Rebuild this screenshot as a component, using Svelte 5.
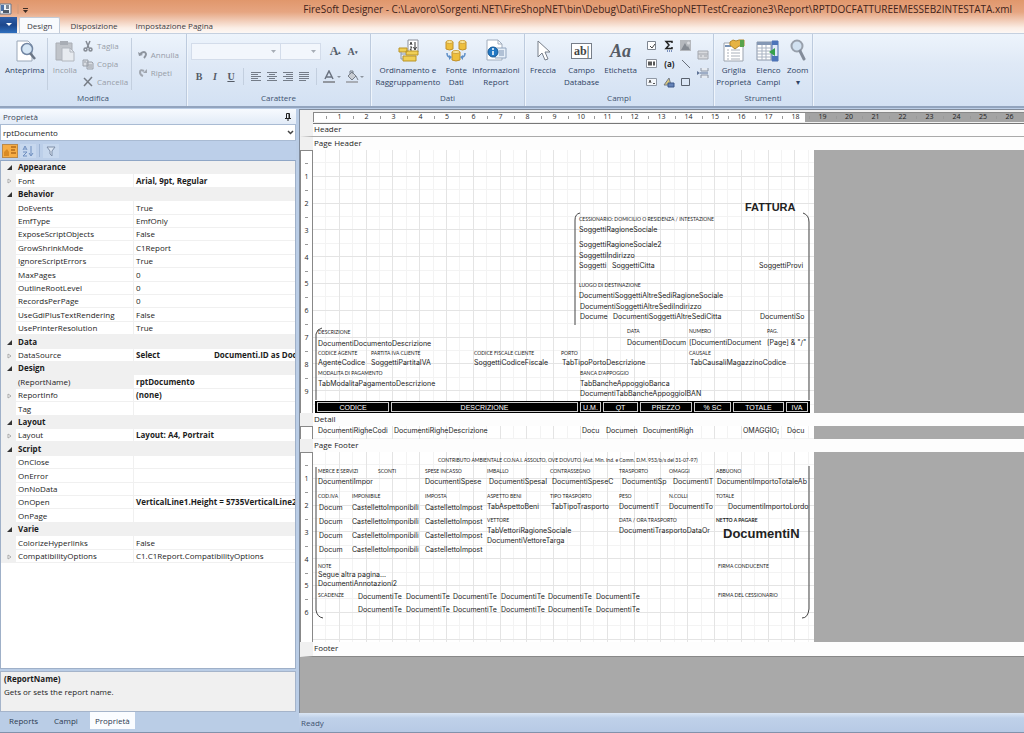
<script lang="ts">
	type Field = [x: number, y: number, text: string, kind?: string];
	type Prop = { name: string; value?: string; bold?: boolean; expand?: boolean; category?: boolean; selected?: boolean };

	const title =
		'FireSoft Designer - C:\\Lavoro\\Sorgenti.NET\\FireShopNET\\bin\\Debug\\Dati\\FireShopNETTestCreazione3\\Report\\RPTDOCFATTUREEMESSEB2INTESTATA.xml';

	const tabs = ['Design', 'Disposizione', 'Impostazione Pagina'];
	const panelTabs = ['Reports', 'Campi', 'Proprietà'];

	let activeTab = 'Design';
	let activePanel = 'Proprietà';

	const props: Prop[] = [
		{ name: 'Appearance', category: true },
		{ name: 'Font', value: 'Arial, 9pt, Regular', bold: true, expand: true },
		{ name: 'Behavior', category: true },
		{ name: 'DoEvents', value: 'True' },
		{ name: 'EmfType', value: 'EmfOnly' },
		{ name: 'ExposeScriptObjects', value: 'False' },
		{ name: 'GrowShrinkMode', value: 'C1Report' },
		{ name: 'IgnoreScriptErrors', value: 'True' },
		{ name: 'MaxPages', value: '0' },
		{ name: 'OutlineRootLevel', value: '0' },
		{ name: 'RecordsPerPage', value: '0' },
		{ name: 'UseGdiPlusTextRendering', value: 'False' },
		{ name: 'UsePrinterResolution', value: 'True' },
		{ name: 'Data', category: true },
		{ name: 'DataSource', value: 'Select                          Documenti.ID as Doc', bold: true, expand: true },
		{ name: 'Design', category: true },
		{ name: '(ReportName)', value: 'rptDocumento', bold: true, selected: true },
		{ name: 'ReportInfo', value: '(none)', bold: true, expand: true },
		{ name: 'Tag' },
		{ name: 'Layout', category: true },
		{ name: 'Layout', value: 'Layout: A4, Portrait', bold: true, expand: true },
		{ name: 'Script', category: true },
		{ name: 'OnClose' },
		{ name: 'OnError' },
		{ name: 'OnNoData' },
		{ name: 'OnOpen', value: 'VerticalLine1.Height = 5735VerticalLine2', bold: true },
		{ name: 'OnPage' },
		{ name: 'Varie', category: true },
		{ name: 'ColorizeHyperlinks', value: 'False' },
		{ name: 'CompatibilityOptions', value: 'C1.C1Report.CompatibilityOptions', expand: true }
	];

	// centimetres to whole screen pixels
	const cm = (n: number) => Math.round((n * 134) / 5);
	const span = (n: number) => cm(n + 0.5) - cm(n - 0.5);
	const range = (n: number) => Array.from({ length: n }, (_, i) => i + 1);

	const pageHeader: Field[] = [
		[431, 52, 'FATTURA', 'big'],
		[266, 64, 'CESSIONARIO: DOMICILIO O RESIDENZA / INTESTAZIONE', 'tiny'],
		[266, 75, 'SoggettiRagioneSociale'],
		[266, 90, 'SoggettiRagioneSociale2'],
		[266, 101, 'SoggettiIndirizzo'],
		[266, 111, 'Soggetti'],
		[299, 111, 'SoggettiCitta'],
		[446, 111, 'SoggettiProvi'],
		[266, 130, 'LUOGO DI DESTINAZIONE', 'tiny'],
		[266, 141, 'DocumentiSoggettiAltreSediRagioneSociale'],
		[267, 152, 'DocumentiSoggettiAltreSediIndirizzo'],
		[267, 162, 'Docume'],
		[300, 162, 'DocumentiSoggettiAltreSediCitta'],
		[447, 162, 'DocumentiSo'],
		[314, 176, 'DATA', 'tiny'],
		[376, 176, 'NUMERO', 'tiny'],
		[454, 176, 'PAG.', 'tiny'],
		[5, 177, 'DESCRIZIONE', 'tiny'],
		[314, 188, 'DocumentiDocum'],
		[376, 188, '[DocumentiDocument'],
		[454, 188, '[Page] & "/"'],
		[5, 189, 'DocumentiDocumentoDescrizione'],
		[5, 198, 'CODICE AGENTE', 'tiny'],
		[58, 198, 'PARTITA IVA CLIENTE', 'tiny'],
		[161, 198, 'CODICE FISCALE CLIENTE', 'tiny'],
		[248, 198, 'PORTO', 'tiny'],
		[376, 198, 'CAUSALE', 'tiny'],
		[5, 208, 'AgenteCodice'],
		[58, 208, 'SoggettiPartitaIVA'],
		[161, 208, 'SoggettiCodiceFiscale'],
		[249, 208, 'TabTipoPortoDescrizione'],
		[377, 208, 'TabCausaliMagazzinoCodice'],
		[5, 218, 'MODALITA DI PAGAMENTO', 'tiny'],
		[267, 218, 'BANCA D\'APPOGGIO', 'tiny'],
		[5, 229, 'TabModalitaPagamentoDescrizione'],
		[267, 229, 'TabBancheAppoggioBanca'],
		[267, 239, 'DocumentiTabBancheAppoggioIBAN']
	];

	const detail: Field[] = [
		[5, 0, 'DocumentiRigheCodi'],
		[81, 0, 'DocumentiRigheDescrizione'],
		[269, 0, 'Docu'],
		[293, 0, 'Documen'],
		[330, 0, 'DocumentiRigh'],
		[430, 0, 'OMAGGIO¡'],
		[474, 0, 'Docu']
	];

	const pageFooter: Field[] = [
		[125, 3, 'CONTRIBUTO AMBIENTALE CO.NA.I. ASSOLTO, OVE DOVUTO. (Aut. Min. Ind. e Comm. D.M. 953/b/s del 31-07-97)', 'tiny'],
		[5, 14, 'MERCE E SERVIZI', 'tiny'],
		[65, 14, 'SCONTI', 'tiny'],
		[112, 14, 'SPESE INCASSO', 'tiny'],
		[174, 14, 'IMBALLO', 'tiny'],
		[237, 14, 'CONTRASSEGNO', 'tiny'],
		[306, 14, 'TRASPORTO', 'tiny'],
		[356, 14, 'OMAGGI', 'tiny'],
		[403, 14, 'ABBUONO', 'tiny'],
		[5, 25, 'DocumentiImpor'],
		[112, 25, 'DocumentiSpese'],
		[176, 25, 'DocumentiSpesaI'],
		[239, 25, 'DocumentiSpeseC'],
		[309, 25, 'DocumentiSp'],
		[360, 25, 'DocumentiT'],
		[404, 25, 'DocumentiImportoTotaleAb'],
		[5, 39, 'COD.IVA', 'tiny'],
		[39, 39, 'IMPONIBILE', 'tiny'],
		[112, 39, 'IMPOSTA', 'tiny'],
		[174, 39, 'ASPETTO BENI', 'tiny'],
		[237, 39, 'TIPO TRASPORTO', 'tiny'],
		[306, 39, 'PESO', 'tiny'],
		[356, 39, 'N.COLLI', 'tiny'],
		[403, 39, 'TOTALE', 'tiny'],
		[174, 50, 'TabAspettoBeni'],
		[238, 50, 'TabTipoTrasporto'],
		[306, 50, 'DocumentiT'],
		[356, 50, 'DocumentiTo'],
		[415, 50, 'DocumentiImportoLordo'],
		[174, 63, 'VETTORE', 'tiny'],
		[306, 63, 'DATA / ORA TRASPORTO', 'tiny'],
		[403, 63, 'NETTO A PAGARE', 'tiny strong'],
		[174, 74, 'TabVettoriRagioneSociale'],
		[306, 74, 'DocumentiTrasportoDataOr'],
		[410, 77, 'DocumentiN', 'net'],
		[174, 84, 'DocumentiVettoreTarga'],
		...[51, 65, 79, 93].flatMap((y): Field[] => [
			[6, y, 'Docum'],
			[39, y, 'CastellettoImponibili'],
			[112, y, 'CastellettoImpost']
		]),
		[5, 109, 'NOTE', 'tiny'],
		[405, 109, 'FIRMA CONDUCENTE', 'tiny'],
		[5, 118, 'Segue altra pagina...'],
		[5, 127, 'DocumentiAnnotazioni2'],
		[5, 138, 'SCADENZE', 'tiny'],
		[405, 138, 'FIRMA DEL CESSIONARIO', 'tiny'],
		...[140, 153].flatMap((y) => [45, 93, 140, 188, 235, 283].map((x): Field => [x, y, 'DocumentiTe']))
	];

	const band: [string, number][] = [
		['CODICE', 72],
		['DESCRIZIONE', 187],
		['U.M.', 21],
		['QT', 35],
		['PREZZO', 52],
		['% SC', 37],
		['TOTALE', 51],
		['IVA', 22]
	];

	const sections = [
		{
			name: 'Page Header',
			height: 263,
			marks: 9,
			fields: pageHeader,
			frame: 'M262 175V70Q262 64 267 63M490 63Q496 65 496 72V250M3 250V184Q4 179 9 178'
		},
		{ name: 'Detail', height: 13, marks: 0, fields: detail, frame: '' },
		{
			name: 'Page Footer',
			height: 190,
			marks: 6,
			fields: pageFooter,
			frame: 'M3 15V158Q4 165 10 166M496 14V157Q495 166 489 166'
		}
	];

	const smallTools = ['check', 'sigma', 'image', 'barcode', 'braces', 'line', 'label', 'shape', 'rect'];
</script>

{#snippet glyph(name: string)}
	{#if name === 'preview'}
		<svg width="24" height="24" viewBox="0 0 24 24" fill="none">
			<path d="M4 2h11l4 4v16H4z" fill="#fff" stroke="#9aa7b8" />
			<circle cx="14" cy="10" r="5.5" fill="#d5e6f5" stroke="#7286a3" stroke-width="1.5" />
			<path d="M17 14l5 6" stroke="#6b7686" stroke-width="2.5" />
		</svg>
	{:else if name === 'paste'}
		<svg width="24" height="24" viewBox="0 0 24 24" fill="none">
			<path d="M3 4h16v17H3z" fill="#c0c4ca" stroke="#a9adb4" />
			<path d="M7 2h8v4H7z" fill="#a8adb5" />
			<path d="M9 9h8l4 4v9H9z" fill="#e7ebf0" stroke="#b1b6be" />
			<path d="M17 9v4h4" stroke="#b1b6be" />
		</svg>
	{:else if name === 'cut'}
		<svg width="12" height="12" viewBox="0 0 12 12" fill="none" stroke="#858b94" stroke-width="1.5">
			<path d="M4 1l3 7M8 1L5 8" />
			<circle cx="3.5" cy="9.5" r="1.5" /><circle cx="8.5" cy="9.5" r="1.5" />
		</svg>
	{:else if name === 'copy'}
		<svg width="12" height="12" viewBox="0 0 12 12" fill="#d9dde3" stroke="#9aa0a9">
			<path d="M1 2h5v6H1zM5 4h5l1 1v6H5z" /><path d="M6 7h4M6 9h4M2 4h2" />
		</svg>
	{:else if name === 'delete'}
		<svg width="12" height="12" viewBox="0 0 12 12" stroke="#777d86" stroke-width="1.5"><path d="M2 2l8 8M10 1L2 10" /></svg>
	{:else if name === 'undo'}
		<svg width="10" height="10" viewBox="0 0 10 10" fill="none"><path d="M2 4q5-4 6 0q0 2-2 4" stroke="#8d949e" stroke-width="2" /><path d="M0 2l1 4 4-1z" fill="#8d949e" /></svg>
	{:else if name === 'redo'}
		<svg width="10" height="10" viewBox="0 0 10 10" fill="none"><path d="M6 3q-4-2-4 1q0 3 3 4" stroke="#a1a7b0" stroke-width="2" /><path d="M9 1v4H5z" fill="#a1a7b0" /></svg>
	{:else if name === 'sort'}
		<svg width="24" height="24" viewBox="0 0 24 24" fill="none">
			<path d="M12 1h10v12H12z" fill="#fff" stroke="#8a8f99" />
			<path d="M19 3v7M17.5 8l1.5 3 1.5-3" stroke="#333" />
			<path d="M14 6l1-3 1 3M14 8h2l-2 3h2" stroke="#444" />
			<path d="M3 9h8v4H3zM10 12h12v4H10zM7 17h13v5H7z" fill="#f0cf55" stroke="#b99327" />
			<path d="M5 13v7h2M5 15h5" stroke="#8d98a8" />
		</svg>
	{:else if name === 'source'}
		<svg width="24" height="24" viewBox="0 0 24 24">
			<g fill="#eebf3c" stroke="#c0902a">
				<path d="M2 3v7q3.5 2 7 0V3z" /><path d="M15 3v7q3.5 2 7 0V3z" /><path d="M8 13v8q4 2 8 0v-8z" />
			</g>
			<g fill="#fbe79a" stroke="#d0a23a">
				<ellipse cx="5.5" cy="3" rx="3.5" ry="1.5" /><ellipse cx="18.5" cy="3" rx="3.5" ry="1.5" /><ellipse cx="12" cy="13" rx="4" ry="1.5" />
			</g>
			<path d="M3 14q0 4 3 4M21 14q0 4-3 4" fill="none" stroke="#5e8fc7" stroke-width="1.5" />
			<path d="M5 16l3 2-3 3zM19 16l-3 2 3 3z" fill="#5e8fc7" />
		</svg>
	{:else if name === 'info'}
		<svg width="24" height="24" viewBox="0 0 24 24">
			<path d="M3 1h11l4 4v16H3z" fill="#fff" stroke="#a1adbd" />
			<path d="M14 1v4h4" fill="none" stroke="#a1adbd" />
			<path d="M11 9h11v10H11z" fill="#e5eef8" stroke="#91a5be" />
			<path d="M15 12h5M15 14h5M15 16h5" stroke="#7c93b2" />
			<circle cx="9" cy="13" r="5" fill="#2379c4" stroke="#145795" />
			<path d="M9 12v4M9 9v2" stroke="#fff" stroke-width="1.5" />
		</svg>
	{:else if name === 'arrow'}
		<svg width="24" height="24" viewBox="0 0 24 24"><path d="M7 2v16l4-4 3 7 3-1-3-7h5z" fill="#fff" stroke="#777e89" /></svg>
	{:else if name === 'textbox'}
		<span class="abox">ab|</span>
	{:else if name === 'etichetta'}
		<span class="aa">Aa</span>
	{:else if name === 'grid'}
		<svg width="24" height="24" viewBox="0 0 24 24">
			<path d="M2 4h19v18H2z" fill="#fff" stroke="#9ba3ae" />
			<path d="M5 11h2M5 14h2M5 17h2M5 20h2M9 11h9M9 14h9M9 17h9M9 20h9" stroke="#a9b0ba" />
			<path d="M3 7h6" stroke="#7691b4" stroke-width="2" />
			<path d="M8 3l3-2 3 1 3-1h5v6h-5l-4 3-5-4z" fill="#e6b343" stroke="#b48629" />
			<path d="M18 1h4v7h-4z" fill="#58a34b" />
		</svg>
	{:else if name === 'fieldlist'}
		<svg width="24" height="24" viewBox="0 0 24 24">
			<path d="M1 3h14v18H1z" fill="#fff" stroke="#8a96a8" />
			<path d="M1 3h14v3H1z" fill="#8598b4" />
			<path d="M1 9h14M1 12h14M1 15h14M1 18h14M6 6v15M10 6v15" stroke="#a9b3c2" />
			<path d="M16 2h6v20h-6z" fill="#dfe9f7" stroke="#4c6fae" />
			<path d="M16 2h6v4h-6zM16 17h6v5h-6z" fill="#4c74b9" />
			<path d="M19 9v8l-6-4z" fill="#35a04a" />
		</svg>
	{:else if name === 'zoom'}
		<svg width="24" height="24" viewBox="0 0 24 24">
			<circle cx="11" cy="7" r="5.5" fill="#d1e1f1" stroke="#98a0ac" stroke-width="2" />
			<path d="M14 12l4 8" stroke="#838c9a" stroke-width="3" stroke-linecap="round" />
		</svg>
	{:else if name === 'check'}
		<svg width="12" height="12" viewBox="0 0 12 12" fill="#fff" stroke="#7d8590"><path d="M1.5 1.5h8v8h-8z" /><path d="M4 6l2 2 3-4" fill="none" stroke="#444" /></svg>
	{:else if name === 'sigma'}
		<svg width="12" height="12" viewBox="0 0 12 12" fill="none" stroke="#222" stroke-width="1.5"><path d="M9 3V1.5H3L6 5 3 8.5h6V7" /><path d="M4 11h6" stroke="#546fa8" stroke-dasharray="1 1" /></svg>
	{:else if name === 'image'}
		<svg width="12" height="12" viewBox="0 0 12 12"><path d="M0 0h11v11H0z" fill="#b5b8bd" /><path d="M1 10l4-7 2 4 1-1 2 4z" fill="#858a92" /><circle cx="8.5" cy="3" r="1.5" fill="#d9dbdf" /></svg>
	{:else if name === 'barcode'}
		<svg width="12" height="12" viewBox="0 0 12 12"><path d="M.5 1.5h10v8H.5z" fill="#fff" stroke="#8b929d" /><path d="M3 3.5v4M5 3.5v4M8 3.5v4" stroke="#222" stroke-width="1.5" /></svg>
	{:else if name === 'braces'}
		<b class="braces">(a)</b>
	{:else if name === 'line'}
		<svg width="12" height="12" viewBox="0 0 12 12" stroke="#666d78"><path d="M2 2l8 8" /></svg>
	{:else if name === 'label'}
		<svg width="12" height="12" viewBox="0 0 12 12"><path d="M.5 2.5h10v7H.5z" fill="#f4f7fb" stroke="#8f98a5" /><path d="M3 7l1-3 1 3M7 7.5h2" fill="none" stroke="#555" /></svg>
	{:else if name === 'shape'}
		<svg width="12" height="12" viewBox="0 0 12 12"><path d="M1 9l5-7 2 7z" fill="#d9c77d" stroke="#737b88" /><path d="M5 7h6v4H5z" fill="#6482b7" stroke="#3a5689" /></svg>
	{:else if name === 'rect'}
		<svg width="12" height="12" viewBox="0 0 12 12" fill="none" stroke="#59616d"><path d="M1.5 2.5h8v7h-8z" /></svg>
	{:else if name === 'subreport'}
		<svg width="12" height="12" viewBox="0 0 12 12"><path d="M1 2h10v8H1z" fill="#d8dade" stroke="#a3a7ae" /><path d="M1 5h10M3 7h2M7 7h3" stroke="#a3a7ae" /></svg>
	{:else if name === 'break'}
		<svg width="12" height="12" viewBox="0 0 12 12" fill="#e6ebf2" stroke="#8e96a3"><path d="M4 1v3h7V1M4 11V8h7v3" /><path d="M3 6h8" stroke="#5f7396" /><path d="M0 4l3 2-3 2z" fill="#5f7396" stroke="none" /></svg>
	{/if}
{/snippet}

{#snippet big(name: string, lines: string[], disabled = false)}
	<button class="big" {disabled}>
		<span class="pic">{@render glyph(name)}</span>
		{#each lines as line}<span>{line}</span>{/each}
	</button>
{/snippet}

{#snippet ribbonLine(align: string)}
	<button class="tool" aria-label="Allinea {align}">
		<svg width="12" height="12" viewBox="0 0 12 12" stroke="#747c88">
			{#if align === 'sinistra'}
				<path d="M1 1.5h10M1 3.5h7M1 5.5h10M1 7.5h7M1 9.5h10" />
			{:else if align === 'centro'}
				<path d="M1 1.5h10M3 3.5h6M1 5.5h10M3 7.5h6M1 9.5h10" />
			{:else if align === 'destra'}
				<path d="M1 1.5h10M4 3.5h7M1 5.5h10M4 7.5h7M1 9.5h10" />
			{:else}
				<path d="M1 1.5h10M1 3.5h10M1 5.5h10M1 7.5h10M1 9.5h7" />
			{/if}
		</svg>
	</button>
{/snippet}

<div class="window">
	<header>
		<div class="titlebar">
			<svg width="16" height="14" viewBox="0 0 16 14">
				<path d="M0 2h11v10H0z" fill="#eef2f7" stroke="#68778c" />
				<path d="M1 3h3v6H1z" fill="#4d72a8" />
				<path d="M6 3h3v4H6z" fill="#7d8794" />
				<path d="M3 8h6v3H3z" fill="#4f5a68" />
			</svg>
			<svg width="16" height="14" viewBox="0 0 16 14"><path d="M2 2v10" stroke="#cf9a7a" /><path d="M7 6.5h5" stroke="#3d2d25" /><path d="M7 8h5L9.5 11z" fill="#3d2d25" /></svg>
			<h1>{title}</h1>
		</div>
		<nav>
			<button class="file" aria-label="File"><svg width="8" height="4" viewBox="0 0 8 4"><path d="M1 0h6L4 3z" fill="#fff" /></svg></button>
			{#each tabs as tab}
				<button class="tab" class:active={tab === activeTab} on:click={() => (activeTab = tab)}>{tab}</button>
			{/each}
		</nav>
	</header>

	<div class="ribbon">
		<section class="modifica">
			<div class="body">
				{@render big('preview', ['Anteprima'])}
				<i></i>
				{@render big('paste', ['Incolla'], true)}
				<div class="stack">
					<button class="row" disabled>{@render glyph('cut')}Taglia</button>
					<button class="row" disabled>{@render glyph('copy')}Copia</button>
					<button class="row" disabled>{@render glyph('delete')}Cancella</button>
				</div>
				<i></i>
				<div class="stack two">
					<button class="row" disabled>{@render glyph('undo')}Annulla</button>
					<button class="row" disabled>{@render glyph('redo')}Ripeti</button>
				</div>
			</div>
			<h2>Modifica</h2>
		</section>

		<section class="carattere">
			<div class="body fonts">
				<div class="line">
					<label class="combo name"><select aria-label="Tipo di carattere"><option></option></select><svg width="5" height="3" viewBox="0 0 5 3"><path d="M0 0h5L2.5 3z" fill="#a7adb6" /></svg></label>
					<label class="combo size"><select aria-label="Dimensione"><option></option></select><svg width="5" height="3" viewBox="0 0 5 3"><path d="M0 0h5L2.5 3z" fill="#a7adb6" /></svg></label>
					<button class="tool grow">A<sup>▴</sup></button>
					<button class="tool grow small">A<sup>▾</sup></button>
				</div>
				<div class="line">
					<button class="tool serif"><b>B</b></button>
					<button class="tool serif"><em>I</em></button>
					<button class="tool serif"><u>U</u></button>
					<i class="short"></i>
					{@render ribbonLine('sinistra')}
					{@render ribbonLine('centro')}
					{@render ribbonLine('destra')}
					{@render ribbonLine('giustifica')}
					<i class="short"></i>
					<button class="tool colour" aria-label="Colore carattere"><svg width="20" height="14" viewBox="0 0 20 14" fill="none"><path d="M3 9l4-8 4 8M4 7h6" stroke="#6b7380" stroke-width="1.5" /><path d="M1 11h12v2H1z" fill="#92979f" /><path d="M15 6h4l-2 2z" fill="#8c939e" /></svg></button>
					<button class="tool colour" aria-label="Colore sfondo"><svg width="20" height="14" viewBox="0 0 20 14" fill="none"><path d="M3 6l4-4 4 4-4 4z" fill="#c9cdd3" stroke="#777e89" /><path d="M5 4V1h3v3" stroke="#777e89" /><path d="M11 6l2 4" stroke="#777e89" /><path d="M1 11h12v2H1z" fill="#a8adb5" /><path d="M15 6h4l-2 2z" fill="#8c939e" /></svg></button>
				</div>
			</div>
			<h2>Carattere</h2>
		</section>

		<section class="dati">
			<div class="body">
				{@render big('sort', ['Ordinamento e', 'Raggruppamento'])}
				{@render big('source', ['Fonte', 'Dati'])}
				{@render big('info', ['Informazioni', 'Report'])}
			</div>
			<h2>Dati</h2>
		</section>

		<section class="campi">
			<div class="body">
				{@render big('arrow', ['Freccia'])}
				<i></i>
				{@render big('textbox', ['Campo', 'Database'])}
				{@render big('etichetta', ['Etichetta'])}
				<i></i>
				<div class="tools">
					{#each smallTools as tool}
						<button class="tool" aria-label={tool}>{@render glyph(tool)}</button>
					{/each}
				</div>
				<div class="stack two">
					<button class="tool" aria-label="subreport">{@render glyph('subreport')}</button>
					<button class="tool" aria-label="break">{@render glyph('break')}</button>
				</div>
			</div>
			<h2>Campi</h2>
		</section>

		<section class="strumenti">
			<div class="body">
				{@render big('grid', ['Griglia', 'Proprietà'])}
				{@render big('fieldlist', ['Elenco', 'Campi'])}
				{@render big('zoom', ['Zoom', '▾'])}
			</div>
			<h2>Strumenti</h2>
		</section>
	</div>

	<main>
		<aside>
			<div class="caption">
				<span>Proprietà</span>
				<svg width="8" height="8" viewBox="0 0 8 8" fill="none" stroke="#222"><path d="M2.5 5V.5h3V5M1 5.5h6M4 5v3" /><path d="M5 1v4" /></svg>
			</div>
			<label class="combo object">
				<select aria-label="Oggetto"><option>rptDocumento</option></select>
				<svg width="7" height="5" viewBox="0 0 7 5" fill="none" stroke="#444" stroke-width="1.5"><path d="M1 1l2.5 2.5L6 1" /></svg>
			</label>
			<div class="propbar">
				<button class="on" aria-label="Per categoria"><svg width="14" height="12" viewBox="0 0 14 12"><path d="M1 7l3-3 2 3v4H1z" fill="#d98b25" /><path d="M8 2h5M8 5h4M8 8h5" stroke="#b26b1b" stroke-width="1.5" /></svg></button>
				<button aria-label="Alfabetico"><svg width="14" height="12" viewBox="0 0 14 12" fill="none" stroke="#6f8fc0"><path d="M2 5l2-4 2 4M3 4h2M2 7h4l-4 4h4M10 1v9M8 8l2 3 2-3" /></svg></button>
				<i></i>
				<button aria-label="Filtro"><svg width="14" height="12" viewBox="0 0 14 12"><path d="M3 2h8L8 6v5L6 9V6z" fill="#dce6f3" stroke="#7f8fa8" /></svg></button>
			</div>
			<div class="grid">
				<table>
					<colgroup>
						<col class="c-gutter" />
						<col class="c-name" />
						<col />
					</colgroup>
					<tbody>
						{#each props as p}
							<tr class:category={p.category}>
								<td class="gutter">
									{#if p.category}
										<svg width="5" height="5" viewBox="0 0 5 5"><path d="M5 0v5H0z" fill="#333" /></svg>
									{:else if p.expand}
										<svg width="5" height="6" viewBox="0 0 5 6"><path d="M1 1l3 2-3 2z" fill="#fff" stroke="#aaa" /></svg>
									{/if}
								</td>
								<th scope="row" class:selected={p.selected} colspan={p.category ? 2 : 1}>{p.name}</th>
								{#if !p.category}<td class="value" class:bold={p.bold}>{p.value ?? ''}</td>{/if}
							</tr>
						{/each}
					</tbody>
				</table>
			</div>
			<div class="help">
				<strong>(ReportName)</strong>
				<p>Gets or sets the report name.</p>
			</div>
			<div class="paneltabs">
				{#each panelTabs as tab}
					<button class:active={tab === activePanel} on:click={() => (activePanel = tab)}>{tab}</button>
				{/each}
			</div>
		</aside>

		<div class="designer">
			<div class="surface">
				<div class="ruler">
					<span style="width: {cm(0.5)}px"></span>
					{#each range(26) as n}<span class="mark" style="width: {span(n)}px">{n}</span>{/each}
				</div>
				<h3 class="first">Header</h3>
				{#each sections as s}
					<h3>{s.name}</h3>
					<div class="band">
						<div class="vruler" style="height: {s.height}px">
							<span style="height: {cm(0.5)}px"></span>
							{#each range(s.marks) as n}<span class="mark" style="height: {span(n)}px">{n}</span>{/each}
						</div>
						<div class="paper" style="height: {s.height}px">
							<svg class="lines" width="501" height={s.height}>
								<defs>
									<pattern id="cm" width="134" height="134" patternUnits="userSpaceOnUse">
										<g fill="#f3f3f3">
											{#each range(5) as n}
												<rect x={cm(n - 0.5) - 1} width="1" height="134" /><rect y={cm(n - 0.5) - 1} width="134" height="1" />
											{/each}
										</g>
										<g fill="#e4e4e4">
											{#each range(5) as n}
												<rect x={cm(n) - 1} width="1" height="134" /><rect y={cm(n) - 1} width="134" height="1" />
											{/each}
										</g>
									</pattern>
								</defs>
								<rect width="501" height={s.height} fill="url(#cm)" />
								<path d={s.frame} fill="none" stroke="#444" />
							</svg>
							{#each s.fields as [x, y, text, kind]}
								<span class="field {kind ?? ''}" style="left: {x}px; top: {y}px">{text}</span>
							{/each}
							{#if s.name === 'Page Header'}
								<div class="columns">
									{#each band as [label, width]}<span style="width: {width}px">{label}</span>{/each}
								</div>
							{/if}
						</div>
					</div>
				{/each}
				<h3 class="last">Footer</h3>
			</div>
			<footer>Ready</footer>
		</div>
	</main>
</div>

<style>
	:global(body) {
		margin: 0;
	}
	.window {
		display: flex;
		flex-direction: column;
		min-height: 100vh;
		box-sizing: border-box;
		border-bottom: 1px solid #8292ab;
		background: #bacde6;
		color: #1c1c1c;
		font: 8px/12px 'Open Sans', 'Noto Sans', sans-serif;
	}
	button,
	select {
		margin: 0;
		padding: 0;
		border: 0;
		background: none;
		color: inherit;
		font: inherit;
	}
	h1,
	h2,
	h3,
	p {
		margin: 0;
		font-weight: normal;
	}
	svg {
		flex: none;
		display: block;
	}
	i {
		align-self: stretch;
		width: 1px;
		background: #c3cfdf;
	}

	header {
		background: linear-gradient(#e0976c, #e6a581 12px, #fbeee6 28px, #fdf8f5);
	}
	.titlebar {
		display: flex;
		align-items: center;
		height: 17px;
	}
	h1 {
		flex: 1;
		padding-right: 12px;
		overflow: hidden;
		color: #3f231a;
		font-size: 10px;
		line-height: 16px;
		text-align: right;
		white-space: nowrap;
	}
	nav {
		display: flex;
		height: 16px;
	}
	.file {
		display: flex;
		align-items: center;
		justify-content: center;
		width: 17px;
		background: linear-gradient(#2f5fa8, #1d478d 50%, #2e6fbe);
	}
	.tab {
		padding: 0 8px;
		margin-left: 2px;
		color: #3c3d45;
		line-height: 15px;
	}
	.tab.active {
		padding: 0 7px;
		border: 1px solid #c3cbd7;
		border-bottom: 0;
		border-radius: 2px 2px 0 0;
		background: #f8fafd;
	}

	.ribbon {
		display: flex;
		height: 72px;
		border-top: 1px solid #c5d0df;
		border-bottom: 2px solid #92a4be;
		background: linear-gradient(#edf4fc, #dfe9f6 30px, #d3e1f3);
		color: #2f4363;
	}
	.ribbon section {
		display: flex;
		flex-direction: column;
		box-sizing: border-box;
		border-right: 1px solid #bdcbde;
		box-shadow: 1px 0 #eff5fc;
	}
	.body {
		display: flex;
		flex: 1;
		padding: 4px 4px 2px;
	}
	h2 {
		height: 14px;
		color: #40526f;
		font-size: 8px;
		line-height: 12px;
		text-align: center;
	}
	.modifica {
		width: 187px;
	}
	.carattere {
		width: 184px;
	}
	.dati {
		width: 154px;
	}
	.campi {
		width: 189px;
	}
	.strumenti {
		width: 99px;
	}
	.big {
		display: flex;
		flex-direction: column;
		align-items: center;
		padding: 0 1px;
		white-space: nowrap;
	}
	.pic {
		display: flex;
		align-items: center;
		justify-content: center;
		height: 26px;
	}
	button:disabled {
		color: #989ea8;
	}
	.stack {
		display: flex;
		flex-direction: column;
		justify-content: space-between;
		padding: 0 3px 0 5px;
	}
	.stack.two {
		justify-content: center;
		gap: 6px;
	}
	.row {
		display: flex;
		align-items: center;
		gap: 3px;
		height: 16px;
	}
	.stack.two .row {
		height: 12px;
	}
	.modifica .big {
		padding: 0 3px 0 1px;
	}
	.modifica .big:disabled {
		padding: 0 0 0 5px;
	}
	.modifica .two {
		padding-left: 6px;
	}
	.fonts {
		flex-direction: column;
		gap: 8px;
		padding: 9px 4px 0;
	}
	.line {
		display: flex;
		align-items: center;
		height: 17px;
	}
	.line i.short {
		margin: 0 4px;
	}
	.combo {
		display: grid;
		align-items: center;
		box-sizing: border-box;
		border: 1px solid #d3dcea;
		background: #f2f6fc;
	}
	.combo > * {
		grid-area: 1 / 1;
	}
	.combo select {
		width: 100%;
		appearance: none;
		outline: 0;
	}
	.combo svg {
		justify-self: end;
		margin-right: 4px;
		pointer-events: none;
	}
	.combo.name {
		width: 90px;
		height: 17px;
	}
	.combo.size {
		width: 40px;
		height: 17px;
		border-left: 0;
	}
	.tool {
		display: flex;
		align-items: center;
		justify-content: center;
		width: 17px;
		height: 16px;
	}
	.line .tool.colour {
		width: 24px;
	}
	.grow {
		margin-left: 6px;
		font: bold 12px 'Liberation Serif', serif;
		color: #555e6c;
	}
	.grow.small {
		margin-left: 0;
		font-size: 10px;
	}
	.grow sup {
		font-size: 5px;
	}
	.serif {
		color: #555c67;
		font: bold 10px 'Liberation Serif', serif;
	}
	.abox {
		padding: 0 2px;
		border: 1px solid #777e89;
		background: #fff;
		color: #444;
		font: bold 12px/14px 'Liberation Serif', serif;
	}
	.aa {
		color: #555b65;
		font: italic bold 18px 'Liberation Serif', serif;
	}
	.braces {
		color: #222;
		font-size: 8px;
	}
	.dati .body {
		justify-content: center;
		gap: 2px;
		padding: 4px 0 2px;
	}
	.campi .body {
		gap: 3px;
	}
	.strumenti .body {
		justify-content: center;
		gap: 3px;
		padding: 4px 0 2px;
	}
	.tools {
		display: grid;
		grid-template-columns: repeat(3, 17px);
		align-content: space-between;
		margin-right: -3px;
	}
	.campi .stack {
		padding: 0;
		gap: 2px;
	}

	main {
		display: grid;
		grid-template-columns: 296px 1fr;
		column-gap: 3px;
		flex: 1;
		padding-top: 1px;
	}
	aside {
		display: flex;
		flex-direction: column;
		min-width: 0;
	}
	.caption {
		display: flex;
		align-items: center;
		justify-content: space-between;
		height: 15px;
		padding: 0 4px 0 3px;
		background: linear-gradient(#f7fafe, #e2ebf7);
		color: #3b4658;
	}
	.combo.object {
		height: 17px;
		border-color: #a9bbd3;
		background: #fff;
	}
	.combo.object select {
		padding-left: 2px;
	}
	.combo.object svg {
		margin-right: 1px;
	}
	.propbar {
		display: flex;
		align-items: center;
		height: 19px;
		padding-left: 2px;
		gap: 2px;
		background: #bccfe9;
	}
	.propbar button {
		padding: 1px;
	}
	.propbar button:not(.on) {
		background: #c7d8ee;
	}
	.propbar i {
		margin: 3px 1px;
		background: #9db4d4;
	}
	.propbar .on {
		background: #f6ad45;
		box-shadow: inset 0 0 0 1px #b98a4c;
	}
	.grid {
		flex: 1;
		overflow: hidden;
		border: 1px solid #9fb0c8;
		border-top-color: #8fa6c6;
		background: #fff;
	}
	table {
		width: 100%;
		table-layout: fixed;
		border-spacing: 0;
	}
	.c-gutter {
		width: 15px;
	}
	.c-name {
		width: 117px;
	}
	tr {
		height: 13px;
	}
	/* 67px for every five rows */
	tr:nth-child(5n + 2),
	tr:nth-child(5n + 4) {
		height: 14px;
	}
	td,
	th {
		padding: 0;
		overflow: hidden;
		font-weight: normal;
		line-height: 12px;
		text-align: left;
		white-space: pre;
	}
	.gutter {
		background: #f0f0f0;
	}
	.gutter svg {
		margin-left: 6px;
	}
	th {
		padding-left: 2px;
		border-bottom: 1px solid #f0f0f0;
	}
	.category th {
		background: #f0f0f0;
		font-weight: bold;
	}
	th.selected {
		background: #f0f0f0;
	}
	.value {
		padding-left: 2px;
		border-bottom: 1px solid #f0f0f0;
		border-left: 1px solid #f0f0f0;
	}
	.bold {
		font-weight: bold;
	}
	.help {
		height: 39px;
		margin-top: 2px;
		border: 1px solid #a5b4ca;
		background: #f0f0f0;
		padding-left: 3px;
		line-height: 13px;
	}
	.help strong {
		display: block;
	}
	.paneltabs {
		display: flex;
		height: 20px;
		padding-left: 1px;
		color: #2c3a50;
	}
	.paneltabs button {
		height: 17px;
		padding: 0 8px;
	}
	.paneltabs .active {
		padding: 0 5px;
		margin-left: 4px;
		background: #fafcff;
	}

	.designer {
		display: flex;
		flex-direction: column;
		min-width: 0;
	}
	.surface {
		flex: 1;
		overflow: hidden;
		border-top: 1px solid #808b9b;
		border-left: 1px solid #808b9b;
		background: #a9a9a9;
	}
	.ruler {
		display: flex;
		height: 10px;
		overflow: hidden;
		border: solid #f0f0f0;
		border-width: 2px 0 1px 13px;
		background: linear-gradient(to right, #fff 492px, #a3a3a3 492px);
		box-shadow: inset 1px 1px #888;
		font-size: 7px;
		line-height: 10px;
	}
	.ruler span {
		flex: none;
		text-align: center;
	}
	.ruler .mark {
		background: linear-gradient(#999, #999) no-repeat 0 center / 1px 3px;
	}
	h3 {
		height: 13px;
		padding-left: 1px;
		border-left: 13px solid #f0f0f0;
		background: #fdfdfd;
		font-size: 8px;
		line-height: 12px;
	}
	h3.first {
		border-bottom: 1px solid #aaa;
		box-shadow: inset 0 1px #777;
	}
	h3.last {
		height: 14px;
		border-bottom: 1px solid #888;
	}
	.band {
		display: flex;
	}
	.vruler {
		width: 13px;
		box-sizing: border-box;
		overflow: hidden;
		border: solid #888;
		border-width: 0 1px;
		background: #fff;
		box-shadow: inset 0 1px #888;
		font-size: 7px;
		line-height: 10px;
		text-align: center;
	}
	.vruler span {
		display: flex;
		align-items: center;
		justify-content: center;
	}
	.vruler .mark {
		background: linear-gradient(#999, #999) no-repeat center 0 / 3px 1px;
	}
	.paper {
		position: relative;
		width: 501px;
		box-sizing: border-box;
		overflow: hidden;
		background: #fff;
	}
	.field {
		position: absolute;
		color: #222;
		font: 7px/10px Inter, 'Liberation Sans', sans-serif;
		white-space: nowrap;
	}
	.field.tiny {
		font: 5px/10px Lato, 'Liberation Sans', sans-serif;
	}
	.field.strong {
		font-weight: bold;
	}
	.field.big {
		font: bold 11px/10px 'Liberation Sans', Arial, sans-serif;
	}
	.field.net {
		font: bold 13px/10px 'Liberation Sans', Arial, sans-serif;
	}
	.columns {
		position: absolute;
		left: 2px;
		bottom: 0;
		display: flex;
		gap: 2px;
		height: 10px;
		padding: 1px 2px;
		background: #000;
	}
	.columns span {
		box-sizing: border-box;
		border: 1px solid #ccc;
		color: #fff;
		font: 7px/9px 'Liberation Sans', Arial, sans-serif;
		text-align: center;
		white-space: nowrap;
	}
	footer {
		height: 17px;
		padding: 1px 2px;
		background: linear-gradient(#dbe6f4, #bfd1e9 5px, #b7cae5);
		color: #3f5270;
		line-height: 17px;
	}
</style>
